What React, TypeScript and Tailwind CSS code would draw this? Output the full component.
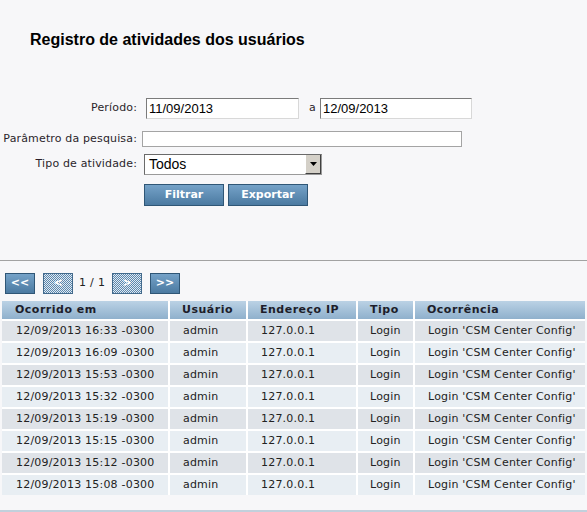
import React from "react";

const rows = [
  "16:33",
  "16:09",
  "15:53",
  "15:32",
  "15:19",
  "15:15",
  "15:12",
  "15:08",
];

const verdana = "font-['DejaVu_Sans',Verdana,sans-serif]";
const arial = "font-['Liberation_Sans',Arial,sans-serif]";

const BlueButton: React.FC<{ label: string; className?: string }> = ({
  label,
  className = "",
}) => (
  <button
    className={`flex items-center justify-center border border-[#2f5676] bg-gradient-to-b from-[#75a2c8] to-[#4b7aa1] text-white font-bold text-[11px] ${verdana} ${className}`}
  >
    {label}
  </button>
);

// disabled state: checkerboard of blue and white, like the old dithered gif
const DitherButton: React.FC<{ label: string; id: string }> = ({ label, id }) => (
  <button
    className={`relative flex items-center justify-center w-[30px] h-[21px] border border-[#436a8c] text-white font-bold text-[11px] ${verdana}`}
  >
    <svg className="absolute inset-0" width="28" height="19" shapeRendering="crispEdges">
      <defs>
        <pattern id={id} width="2" height="2" patternUnits="userSpaceOnUse">
          <rect width="2" height="2" fill="#e3eaf0" />
          <rect width="1" height="1" fill="#5a87af" />
          <rect x="1" y="1" width="1" height="1" fill="#5a87af" />
        </pattern>
      </defs>
      <rect width="28" height="19" fill={`url(#${id})`} />
    </svg>
    <span className="relative">{label}</span>
  </button>
);

const Label: React.FC<{ children: React.ReactNode }> = ({ children }) => (
  <div className={`w-[138px] pr-[1px] text-right text-[11px] tracking-[0.15px] text-[#2b1f2b] ${verdana}`}>
    {children}
  </div>
);

export default function App() {
  return (
    <div className="w-[587px] h-[512px] overflow-hidden bg-[#f7f7f9] flex flex-col">
      <h1
        className={`pl-[30px] pt-[30px] h-[52px] text-[16px] leading-[20px] font-bold text-black ${arial}`}
      >
        Registro de atividades dos usuários
      </h1>

      <div className="flex flex-col mt-[46px]">
        <div className="flex items-center h-[21px]">
          <Label>Período:</Label>
          <input
            readOnly
            value="11/09/2013"
            className={`ml-[8px] w-[153px] h-[21px] px-[2px] bg-white border border-t-[#7b7b7b] border-l-[#7b7b7b] border-r-[#d8d8d8] border-b-[#d8d8d8] text-[13px] text-black outline-none ${arial}`}
          />
          <span className={`ml-[10px] w-[10px] text-[11px] text-[#2b1f2b] ${verdana}`}>a</span>
          <input
            readOnly
            value="12/09/2013"
            className={`ml-[1px] w-[152px] h-[21px] px-[2px] bg-white border border-t-[#7b7b7b] border-l-[#7b7b7b] border-r-[#d8d8d8] border-b-[#d8d8d8] text-[13px] text-black outline-none ${arial}`}
          />
        </div>

        <div className="flex items-center h-[16px] mt-[12px]">
          <Label>Parâmetro da pesquisa:</Label>
          <input
            readOnly
            value=""
            className="ml-[4px] w-[320px] h-[16px] bg-white border border-[#a4a4a4] outline-none"
          />
        </div>

        <div className="flex items-center h-[21px] mt-[7px]">
          <Label>Tipo de atividade:</Label>
          <div className="ml-[6px] w-[178px] h-[21px] flex bg-white border border-t-[#6a6a6a] border-l-[#6a6a6a] border-r-[#9a9a9a] border-b-[#9a9a9a]">
            <span className={`flex-1 pl-[4px] text-[14px] leading-[19px] text-black ${arial}`}>Todos</span>
            <span className="w-[16px] h-full flex items-center justify-center bg-[#d4d0c8] border-l border-l-white border-r border-r-[#404040] border-b border-b-[#404040]">
              <svg width="7" height="4" viewBox="0 0 7 4">
                <path d="M0 0h7L3.5 4z" fill="#000" />
              </svg>
            </span>
          </div>
        </div>

        <div className="flex mt-[9px] ml-[144px] gap-[4px]">
          <BlueButton label="Filtrar" className="w-[80px] h-[22px]" />
          <BlueButton label="Exportar" className="w-[80px] h-[22px]" />
        </div>
      </div>

      <div className="mt-[54px] h-[1px] bg-[#a2a2a2]" />

      <div className={`flex items-center mt-[12px] ml-[5px] h-[21px] text-[11px] text-[#222] ${verdana}`}>
        <BlueButton label="<<" className="w-[30px] h-[21px]" />
        <div className="ml-[8px]">
          <DitherButton label="<" id="dither-prev" />
        </div>
        <span className="ml-[6px] w-[33px] tracking-[0.3px]">1 / 1</span>
        <DitherButton label=">" id="dither-next" />
        <BlueButton label=">>" className="ml-[8px] w-[30px] h-[21px]" />
      </div>

      <div
        className={`mt-[7px] mx-[2px] bg-white grid grid-cols-[166px_76px_108px_55px_1fr] gap-[2px] text-[11px] tracking-[0.2px] text-[#222] ${verdana}`}
      >
        {["Ocorrido em", "Usuário", "Endereço IP", "Tipo", "Ocorrência"].map((h, i) => (
          <div
            key={h}
            className={`h-[18px] flex items-center ${i === 0 ? "pl-[13px]" : "pl-[12px]"} bg-gradient-to-b from-[#bbd2e5] to-[#8fb0cc] font-bold tracking-[0.5px] text-[#1d1d2a]`}
          >
            {h}
          </div>
        ))}
        {rows.map((t, r) => {
          const bg = r % 2 === 0 ? "bg-[#dfe3e8]" : "bg-[#e8eef3]";
          return (
            <React.Fragment key={t}>
              <div className={`h-[20px] flex items-center pl-[14px] ${bg}`}>12/09/2013 {t} -0300</div>
              <div className={`h-[20px] flex items-center pl-[13px] ${bg}`}>admin</div>
              <div className={`h-[20px] flex items-center pl-[13px] ${bg}`}>127.0.0.1</div>
              <div className={`h-[20px] flex items-center pl-[12px] ${bg}`}>Login</div>
              <div className={`h-[20px] flex items-center pl-[13px] whitespace-nowrap ${bg}`}>
                Login 'CSM Center Config'
              </div>
            </React.Fragment>
          );
        })}
      </div>

      <div className="mt-auto h-[2px] bg-[#c2d0dc]" />
    </div>
  );
}
